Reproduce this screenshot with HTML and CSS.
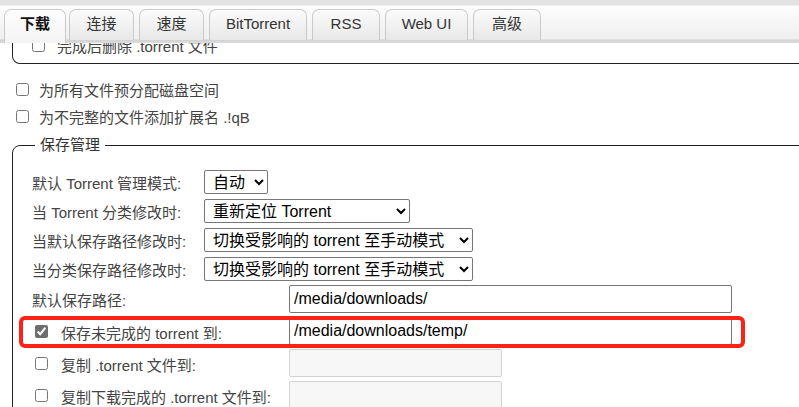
FILE: index.html
```html
<!DOCTYPE html>
<html lang="zh-CN">
<head>
  <meta charset="UTF-8" />
  <meta name="viewport" content="width=device-width, initial-scale=1.0"/>
  <title>选项 - 下载</title>
  <link rel="stylesheet" href="styles.css">
</head>
<body>

  <div class="tabs">
    <div class="tab active" style="width: 62px">下载</div>
    <div class="tab" style="width: 65px">连接</div>
    <div class="tab" style="width: 65px">速度</div>
    <div class="tab" style="width: 98px">BitTorrent</div>
    <div class="tab" style="width: 68px">RSS</div>
    <div class="tab" style="width: 83px">Web UI</div>
    <div class="tab" style="width: 68px">高级</div>
  </div>

  <div class="content">
    <fieldset class="box clipped">
      <div class="check-row">
        <input type="checkbox" id="deleteTorrent">
        <label for="deleteTorrent">完成后删除 .torrent 文件</label>
      </div>
    </fieldset>

    <div class="check-line">
      <input type="checkbox" id="preallocate">
      <label for="preallocate">为所有文件预分配磁盘空间</label>
    </div>
    <div class="check-line">
      <input type="checkbox" id="appendExt">
      <label for="appendExt">为不完整的文件添加扩展名 .!qB</label>
    </div>

    <fieldset class="box">
      <legend>保存管理</legend>

      <div class="mode-grid">
        <label for="autoMode">默认 Torrent 管理模式:</label>
        <select id="autoMode" class="sel-short">
          <option>自动</option>
          <option>手动</option>
        </select>

        <label for="categoryChanged">当 Torrent 分类修改时:</label>
        <select id="categoryChanged" class="sel-mid">
          <option>重新定位 Torrent</option>
        </select>

        <label for="defaultPathChanged">当默认保存路径修改时:</label>
        <select id="defaultPathChanged" class="sel-long">
          <option>切换受影响的 torrent 至手动模式</option>
        </select>

        <label for="categoryPathChanged">当分类保存路径修改时:</label>
        <select id="categoryPathChanged" class="sel-long">
          <option>切换受影响的 torrent 至手动模式</option>
        </select>
      </div>

      <div class="path-grid">
        <div class="path-row">
          <label for="savePath" class="plain">默认保存路径:</label>
          <input type="text" id="savePath" class="path" value="/media/downloads/">
        </div>

        <div class="path-row marked">
          <div class="check-cell">
            <input type="checkbox" id="tempEnabled" checked>
            <label for="tempEnabled">保存未完成的 torrent 到:</label>
          </div>
          <input type="text" id="tempPath" class="path" value="/media/downloads/temp/">
        </div>

        <div class="path-row">
          <div class="check-cell">
            <input type="checkbox" id="exportDir">
            <label for="exportDir">复制 .torrent 文件到:</label>
          </div>
          <input type="text" id="exportPath" class="path short" disabled>
        </div>

        <div class="path-row">
          <div class="check-cell">
            <input type="checkbox" id="exportDirFin">
            <label for="exportDirFin">复制下载完成的 .torrent 文件到:</label>
          </div>
          <input type="text" id="exportFinPath" class="path short" disabled>
        </div>
      </div>
    </fieldset>
  </div>

</body>
</html>
```

FILE: styles.css
```css
html, body {
  margin: 0;
  overflow: hidden;
}

body {
  width: 880px;
  font-family: "Liberation Sans", "Noto Sans CJK SC", sans-serif;
  font-size: 15px;
  color: #444;
  background-color: #fff;
}

/* tab strip */
.tabs {
  height: 43px;
  box-sizing: border-box;
  display: flex;
  align-items: flex-end;
  gap: 5px;
  padding-left: 4px;
  background: linear-gradient(#e3e3e3 0, #e3e3e3 5px, #fdfdfd 6px, #efefef 39px, #d2d2d2 40px, #dcdcdc 43px);
}

.tab {
  height: 31px;
  margin-bottom: 3px;
  box-sizing: border-box;
  border: 1px solid #c9c9c9;
  border-bottom: none;
  border-radius: 7px 7px 0 0;
  background: linear-gradient(#fbfbfb, #e8e8e8);
  box-shadow: inset 0 1px 0 #fff;
  text-align: center;
  line-height: 28px;
  color: #333;
  font-size: 15px;
}

.tab.active {
  height: 34px;
  margin-bottom: 0;
  margin-right: -2px;
  background: linear-gradient(#fdfdfd, #f4f4f4);
  color: #111;
  font-weight: bold;
}

.content {
  overflow: hidden;
}

/* fieldsets */
.box {
  margin: 0 0 0 12px;
  padding: 15px 20px 10px 19px;
  border: 1px solid #222;
  border-radius: 8px;
  min-width: 0;
}

.box.clipped {
  margin-top: -11px;
  padding-top: 0;
  padding-bottom: 5px;
  border-top: none;
  border-radius: 0 0 8px 8px;
}

legend {
  margin-left: 3px;
  padding: 0 5px;
  line-height: 20px;
  font-size: 15px;
  color: #333;
}

input[type="checkbox"] {
  width: 13px;
  height: 13px;
  margin: 0;
  accent-color: #6e6e6e;
}

.check-row {
  height: 26px;
  display: flex;
  align-items: center;
  gap: 12px;
}

.check-line {
  height: 27px;
  display: flex;
  align-items: center;
  gap: 10px;
  padding-left: 16px;
}

.check-line:first-of-type {
  margin-top: 12px;
}

.check-line + .box {
  margin-top: 5px;
}

/* select rows */
.mode-grid {
  display: grid;
  grid-template-columns: 172px auto;
  row-gap: 5px;
  align-items: center;
  justify-items: start;
}

select {
  height: 24px;
  padding: 0 2px 0 4px;
  font-family: "Liberation Sans", "Noto Sans CJK SC", sans-serif;
  font-size: 16px;
  color: #000;
  background-color: #fff;
  border: 1px solid #767676;
  border-radius: 2px;
}

.sel-short { width: 64px; }
.sel-mid { width: 206px; }
.sel-long { width: 269px; }

/* path rows */
.path-grid {
  margin-top: 4px;
  display: flex;
  flex-direction: column;
  gap: 4px;
}

.path-row {
  display: grid;
  grid-template-columns: 257px auto;
  align-items: center;
  justify-items: start;
}

.check-cell {
  display: flex;
  align-items: center;
  gap: 13px;
  padding-left: 3px;
}

.check-cell label {
  margin-top: 3px;
}

.path {
  width: 443px;
  height: 28px;
  box-sizing: border-box;
  padding: 0 4px;
  font-family: "Liberation Sans", sans-serif;
  font-size: 16px;
  color: #000;
  border: 1px solid #767676;
  border-radius: 2px;
}

.path.short {
  width: 213px;
  background-color: #f7f7f7;
  border-color: #d3d3d3;
}

/* red annotation frame */
.marked {
  position: relative;
}

.marked::after {
  content: "";
  position: absolute;
  left: -13px;
  top: -1px;
  width: 726px;
  height: 32px;
  box-sizing: border-box;
  border: 4px solid #fe2116;
  border-radius: 6px;
}
```
